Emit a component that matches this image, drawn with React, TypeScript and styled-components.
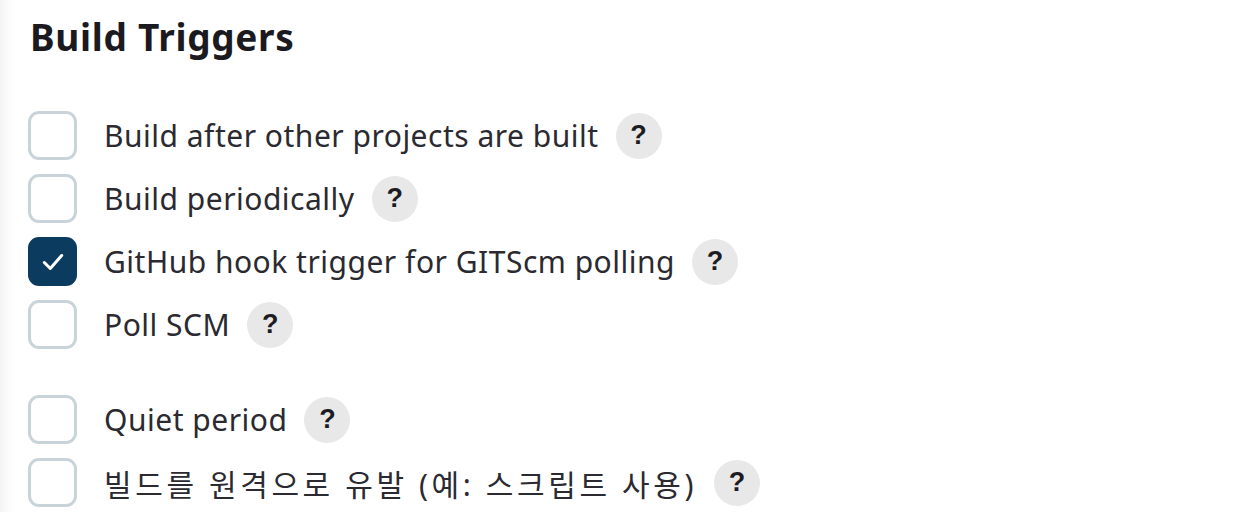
import styled, { createGlobalStyle } from 'styled-components';

const GlobalStyle = createGlobalStyle`
  html, body {
    margin: 0;
    padding: 0;
    background: #ffffff;
  }
  body {
    font-family: "Noto Sans", "Noto Sans CJK KR", sans-serif;
    color: #1f1f24;
  }
`;

const Page = styled.div`
  width: 1250px;
  height: 512px;
  overflow: hidden;
  box-sizing: border-box;
  padding: 12px 0 0 28px;
  background: linear-gradient(to right, #f4f4f4 0px, #fbfbfb 8px, #ffffff 16px);
`;

const Title = styled.h2`
  margin: 0 0 0 2px;
  font-size: 37px;
  font-weight: 700;
  line-height: 50px;
  letter-spacing: 0.7px;
  color: #1a1a20;
`;

const List = styled.div<{ $top: number }>`
  display: flex;
  flex-direction: column;
  gap: 14px;
  margin-top: ${(p) => p.$top}px;
`;

const Row = styled.label`
  display: flex;
  align-items: center;
  height: 49px;
`;

const Box = styled.span<{ $checked?: boolean }>`
  display: flex;
  align-items: center;
  justify-content: center;
  box-sizing: border-box;
  width: 49px;
  height: 49px;
  border-radius: 11px;
  border: 3.5px solid ${(p) => (p.$checked ? '#0b3b5e' : '#c9d3da')};
  background: ${(p) => (p.$checked ? '#0b3b5e' : '#ffffff')};
  flex-shrink: 0;
`;

const Label = styled.span<{ $spacing: number }>`
  margin-left: 27px;
  font-size: 30px;
  color: #2a2a30;
  letter-spacing: ${(p) => p.$spacing}px;
  white-space: nowrap;
`;

const Help = styled.span`
  display: flex;
  align-items: center;
  justify-content: center;
  width: 46px;
  height: 46px;
  margin-left: 17px;
  border-radius: 50%;
  background: #e8e8e8;
  color: #1c1c22;
  font-family: "Liberation Sans", Arial, sans-serif;
  font-weight: 700;
  font-size: 27px;
  flex-shrink: 0;
`;

const Check = () => (
  <svg width="26" height="26" viewBox="0 0 24 24" fill="none">
    <polyline
      points="4,12.5 9.5,18 20,6"
      stroke="#ffffff"
      strokeWidth="2.8"
      strokeLinecap="round"
      strokeLinejoin="round"
    />
  </svg>
);

type Trigger = { label: string; checked?: boolean; spacing?: number };

const mainTriggers: Trigger[] = [
  { label: 'Build after other projects are built' },
  { label: 'Build periodically' },
  { label: 'GitHub hook trigger for GITScm polling', checked: true },
  { label: 'Poll SCM' },
];

const advancedTriggers: Trigger[] = [
  { label: 'Quiet period' },
  { label: '빌드를 원격으로 유발 (예: 스크립트 사용)', spacing: 3.6 },
];

const TriggerRow = ({ label, checked, spacing = 0.5 }: Trigger) => (
  <Row>
    <Box $checked={checked}>{checked && <Check />}</Box>
    <Label $spacing={spacing}>{label}</Label>
    <Help>?</Help>
  </Row>
);

export default function App() {
  return (
    <Page>
      <GlobalStyle />
      <Title>Build Triggers</Title>
      <List $top={49}>
        {mainTriggers.map((t) => (
          <TriggerRow key={t.label} {...t} />
        ))}
      </List>
      <List $top={46}>
        {advancedTriggers.map((t) => (
          <TriggerRow key={t.label} {...t} />
        ))}
      </List>
    </Page>
  );
}
